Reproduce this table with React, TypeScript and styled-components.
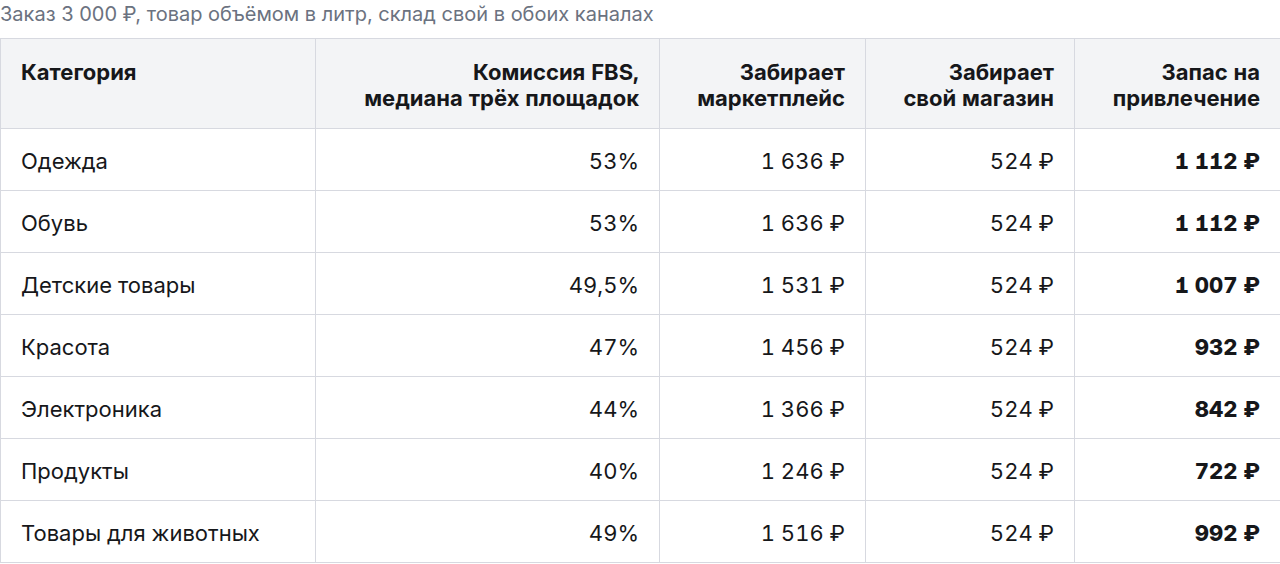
import styled, { createGlobalStyle } from 'styled-components';

const GlobalStyles = createGlobalStyle`
  html, body {
    margin: 0;
    padding: 0;
    background: #ffffff;
  }
  body {
    font-family: Inter, "Noto Sans", sans-serif;
    color: #16171a;
  }
`;

const Page = styled.div`
  width: 1280px;
`;

const Caption = styled.div`
  font-size: 20px;
  line-height: 28px;
  color: #6b7280;
  height: 38px;
`;

const Table = styled.table`
  width: 1280px;
  border-collapse: collapse;
  table-layout: fixed;
  font-size: 22px;
  line-height: 26px;
  font-variant-numeric: tabular-nums;
`;

const HeadCell = styled.th<{ $align?: 'left' | 'right' }>`
  background: #f3f4f6;
  border: 1px solid #d7d9e0;
  padding: 20px 20px 17px;
  font-weight: 650;
  text-align: ${(p) => p.$align ?? 'right'};
  vertical-align: top;
`;

const Cell = styled.td<{ $align?: 'left' | 'right'; $bold?: boolean }>`
  border: 1px solid #d7d9e0;
  padding: 19px 20px 16px;
  text-align: ${(p) => p.$align ?? 'right'};
  font-weight: ${(p) => (p.$bold ? 800 : 400)};
  font-feature-settings: ${(p) => (p.$bold ? '"tnum", "cv01"' : '"tnum"')};
  white-space: nowrap;
`;

type Row = {
  category: string;
  fee: string;
  marketplace: string;
  shop: string;
  reserve: string;
};

const rows: Row[] = [
  { category: 'Одежда', fee: '53%', marketplace: '1 636 ₽', shop: '524 ₽', reserve: '1 112 ₽' },
  { category: 'Обувь', fee: '53%', marketplace: '1 636 ₽', shop: '524 ₽', reserve: '1 112 ₽' },
  { category: 'Детские товары', fee: '49,5%', marketplace: '1 531 ₽', shop: '524 ₽', reserve: '1 007 ₽' },
  { category: 'Красота', fee: '47%', marketplace: '1 456 ₽', shop: '524 ₽', reserve: '932 ₽' },
  { category: 'Электроника', fee: '44%', marketplace: '1 366 ₽', shop: '524 ₽', reserve: '842 ₽' },
  { category: 'Продукты', fee: '40%', marketplace: '1 246 ₽', shop: '524 ₽', reserve: '722 ₽' },
  { category: 'Товары для животных', fee: '49%', marketplace: '1 516 ₽', shop: '524 ₽', reserve: '992 ₽' },
];

export default function App() {
  return (
    <>
      <GlobalStyles />
      <Page>
        <Caption>Заказ 3 000 ₽, товар объёмом в литр, склад свой в обоих каналах</Caption>
        <Table>
          <colgroup>
            <col style={{ width: 315 }} />
            <col style={{ width: 344 }} />
            <col style={{ width: 206 }} />
            <col style={{ width: 209 }} />
            <col style={{ width: 206 }} />
          </colgroup>
          <thead>
            <tr>
              <HeadCell $align="left">Категория</HeadCell>
              <HeadCell>
                Комиссия FBS,
                <br />
                медиана трёх площадок
              </HeadCell>
              <HeadCell>
                Забирает
                <br />
                маркетплейс
              </HeadCell>
              <HeadCell>
                Забирает
                <br />
                свой магазин
              </HeadCell>
              <HeadCell>
                Запас на
                <br />
                привлечение
              </HeadCell>
            </tr>
          </thead>
          <tbody>
            {rows.map((row) => (
              <tr key={row.category}>
                <Cell $align="left">{row.category}</Cell>
                <Cell>{row.fee}</Cell>
                <Cell>{row.marketplace}</Cell>
                <Cell>{row.shop}</Cell>
                <Cell $bold>{row.reserve}</Cell>
              </tr>
            ))}
          </tbody>
        </Table>
      </Page>
    </>
  );
}
